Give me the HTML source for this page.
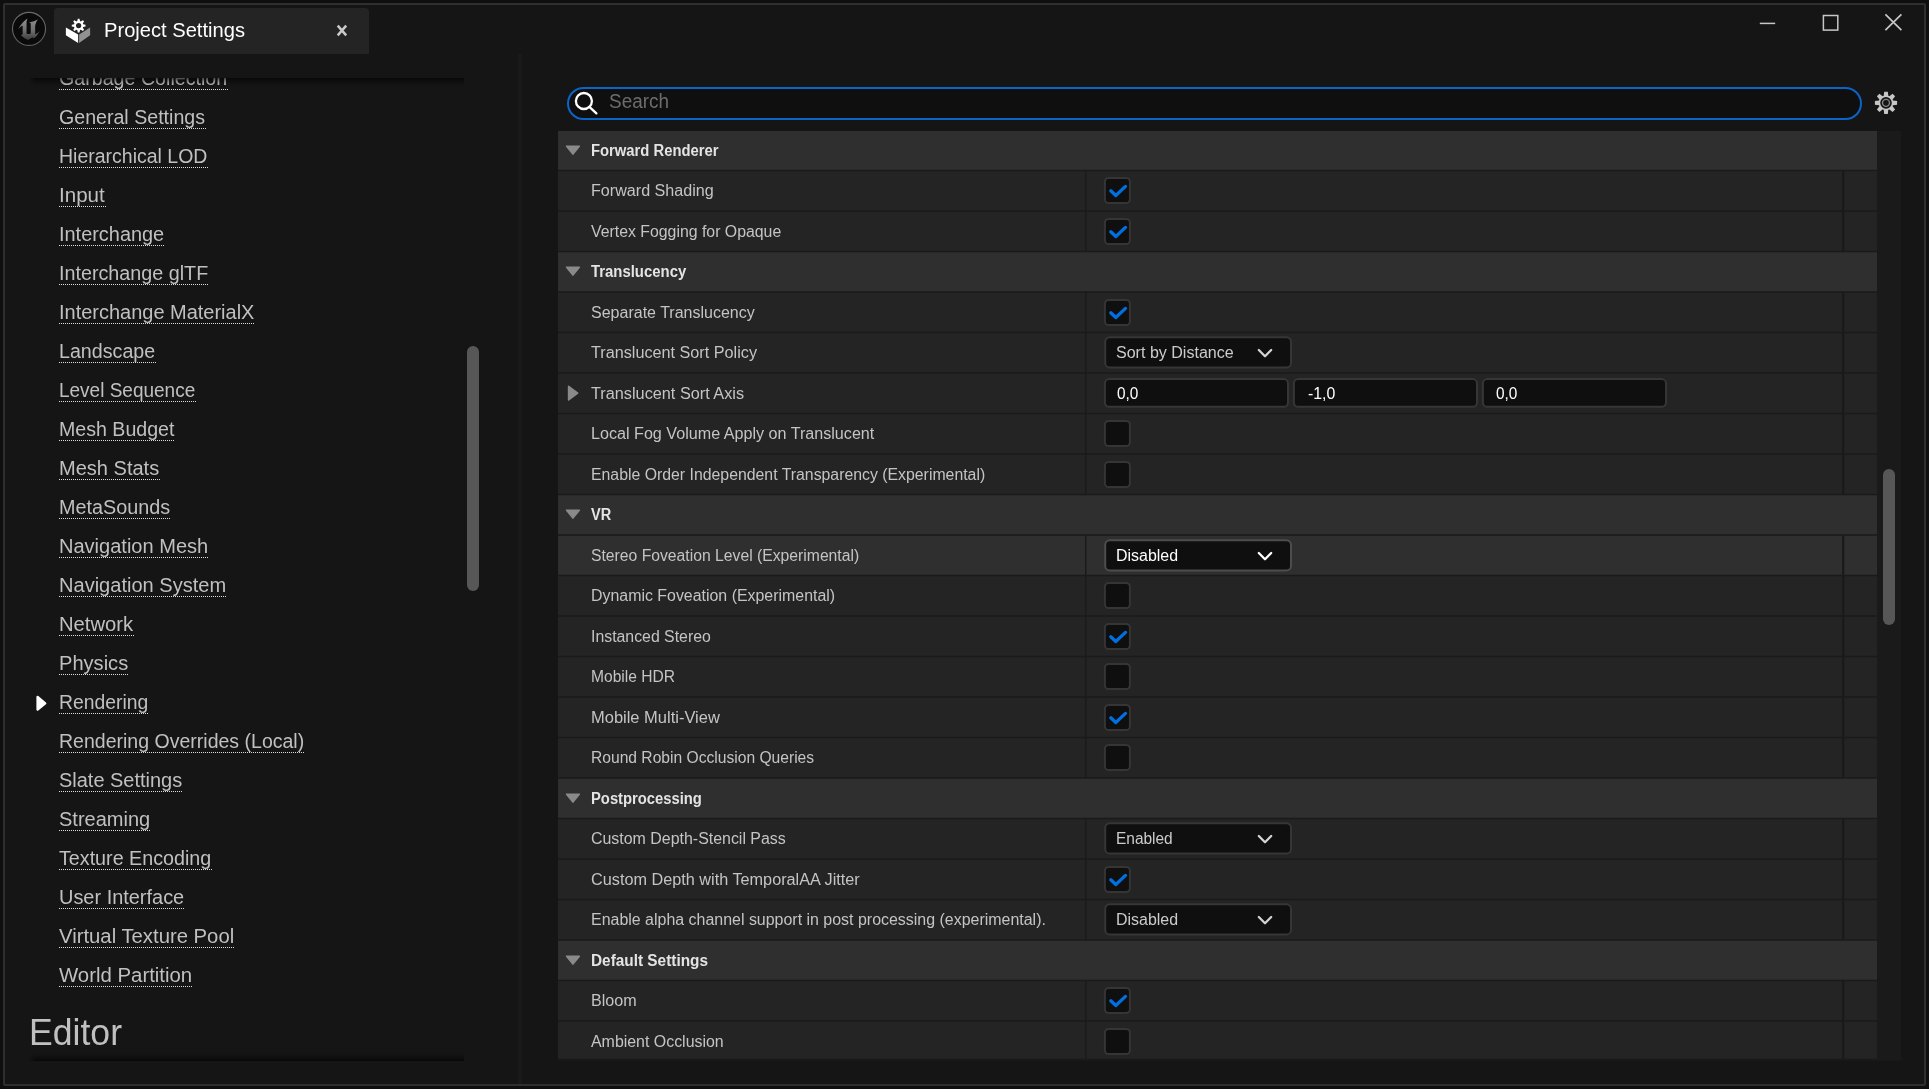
<!DOCTYPE html>
<html lang="en"><head><meta charset="utf-8"><title>Project Settings</title>
<style>
html,body{margin:0;padding:0}
body{width:1929px;height:1089px;background:#0f0f0f;overflow:hidden;position:relative;font-family:"Liberation Sans", Arial, sans-serif;}
.abs{position:absolute}
.win{position:absolute;left:3px;top:3px;width:1923px;height:1083px;box-sizing:border-box;border:2px solid #2f2f2f;border-radius:2px;background:#151515}
.t{position:absolute;white-space:nowrap;transform-origin:0 50%;display:block}
.gl{position:absolute;left:0;top:0;width:1929px;height:1089px;will-change:transform}
.ul{position:absolute;height:1px;background:repeating-linear-gradient(90deg,#dedede 0,#dedede 1px,transparent 1px,transparent 2px)}
.tab{position:absolute;left:54px;top:8px;width:315px;height:46px;background:#242424;border-radius:4px 4px 0 0}
.split{position:absolute;left:518px;top:54px;width:4px;height:1030px;background:#1a1a1a}
.lclip{position:absolute;left:0;top:78px;width:518px;height:983px;overflow:hidden}
.lclip .in{position:absolute;left:0;top:-78px;width:518px;height:1089px}
.shT{position:absolute;left:29px;top:78px;width:435px;height:9px;background:linear-gradient(rgba(0,0,0,.62) 0,rgba(0,0,0,.46) 18%,rgba(0,0,0,.24) 42%,rgba(0,0,0,.08) 72%,rgba(0,0,0,0) 100%)}
.shB{position:absolute;left:29px;top:1053px;width:435px;height:8px;background:linear-gradient(rgba(0,0,0,0) 0,rgba(0,0,0,.2) 45%,rgba(0,0,0,.45) 78%,rgba(0,0,0,.62) 100%)}
.shT,.shB{-webkit-mask-image:linear-gradient(90deg,transparent 0,#000 7px);mask-image:linear-gradient(90deg,transparent 0,#000 7px)}
.thumbL{position:absolute;left:467px;top:346px;width:12px;height:245px;border-radius:6px;background:#575757}
.thumbR{position:absolute;left:1883px;top:469px;width:12px;height:156px;border-radius:6px;background:#575757}
.search{position:absolute;left:567px;top:87px;width:1295px;height:33px;box-sizing:border-box;border:2px solid #0b64c8;border-radius:17px;background:#0f0f0f}
</style></head><body>
<div class="win"></div>
<div class="tab"></div>
<div class="split"></div>
<div class="lclip"><div class="in gl"><span id="t0" class="t lnk" style="left:58.80px;top:68px;font-size:20px;line-height:20px;color:#c0c0c0;transform:scaleX(0.9824);">Garbage Collection</span><span id="t1" class="t lnk" style="left:58.80px;top:107px;font-size:20px;line-height:20px;color:#c0c0c0;transform:scaleX(0.9800);">General Settings</span><span id="t2" class="t lnk" style="left:58.80px;top:146px;font-size:20px;line-height:20px;color:#c0c0c0;transform:scaleX(0.9746);">Hierarchical LOD</span><span id="t3" class="t lnk" style="left:58.80px;top:185px;font-size:20px;line-height:20px;color:#c0c0c0;transform:scaleX(1.0273);">Input</span><span id="t4" class="t lnk" style="left:58.80px;top:224px;font-size:20px;line-height:20px;color:#c0c0c0;transform:scaleX(0.9958);">Interchange</span><span id="t5" class="t lnk" style="left:58.80px;top:263px;font-size:20px;line-height:20px;color:#c0c0c0;transform:scaleX(0.9868);">Interchange glTF</span><span id="t6" class="t lnk" style="left:58.80px;top:302px;font-size:20px;line-height:20px;color:#c0c0c0;transform:scaleX(0.9986);">Interchange MaterialX</span><span id="t7" class="t lnk" style="left:58.80px;top:341px;font-size:20px;line-height:20px;color:#c0c0c0;transform:scaleX(0.9829);">Landscape</span><span id="t8" class="t lnk" style="left:58.80px;top:380px;font-size:20px;line-height:20px;color:#c0c0c0;transform:scaleX(0.9494);">Level Sequence</span><span id="t9" class="t lnk" style="left:58.80px;top:419px;font-size:20px;line-height:20px;color:#c0c0c0;transform:scaleX(0.9791);">Mesh Budget</span><span id="t10" class="t lnk" style="left:58.80px;top:458px;font-size:20px;line-height:20px;color:#c0c0c0;transform:scaleX(1.0015);">Mesh Stats</span><span id="t11" class="t lnk" style="left:58.80px;top:497px;font-size:20px;line-height:20px;color:#c0c0c0;transform:scaleX(0.9902);">MetaSounds</span><span id="t12" class="t lnk" style="left:58.80px;top:536px;font-size:20px;line-height:20px;color:#c0c0c0;transform:scaleX(1.0016);">Navigation Mesh</span><span id="t13" class="t lnk" style="left:58.80px;top:575px;font-size:20px;line-height:20px;color:#c0c0c0;transform:scaleX(1.0027);">Navigation System</span><span id="t14" class="t lnk" style="left:58.80px;top:614px;font-size:20px;line-height:20px;color:#c0c0c0;transform:scaleX(1.0115);">Network</span><span id="t15" class="t lnk" style="left:58.80px;top:653px;font-size:20px;line-height:20px;color:#c0c0c0;transform:scaleX(1.0043);">Physics</span><span id="t16" class="t lnk" style="left:58.80px;top:692px;font-size:20px;line-height:20px;color:#c0c0c0;transform:scaleX(0.9664);">Rendering</span><span id="t17" class="t lnk" style="left:58.80px;top:731px;font-size:20px;line-height:20px;color:#c0c0c0;transform:scaleX(0.9760);">Rendering Overrides (Local)</span><span id="t18" class="t lnk" style="left:58.80px;top:770px;font-size:20px;line-height:20px;color:#c0c0c0;transform:scaleX(0.9982);">Slate Settings</span><span id="t19" class="t lnk" style="left:58.80px;top:809px;font-size:20px;line-height:20px;color:#c0c0c0;transform:scaleX(1.0005);">Streaming</span><span id="t20" class="t lnk" style="left:58.80px;top:848px;font-size:20px;line-height:20px;color:#c0c0c0;transform:scaleX(0.9848);">Texture Encoding</span><span id="t21" class="t lnk" style="left:58.80px;top:887px;font-size:20px;line-height:20px;color:#c0c0c0;transform:scaleX(0.9967);">User Interface</span><span id="t22" class="t lnk" style="left:58.80px;top:926px;font-size:20px;line-height:20px;color:#c0c0c0;transform:scaleX(1.0145);">Virtual Texture Pool</span><span id="t23" class="t lnk" style="left:58.80px;top:965px;font-size:20px;line-height:20px;color:#c0c0c0;transform:scaleX(1.0184);">World Partition</span><span id="t24" class="t hd" style="left:29.10px;top:1014px;font-size:37px;line-height:37px;color:#c0c0c0;transform:scaleX(0.9622);">Editor</span><div class="ul" style="left:59px;top:89px;width:169px"></div><div class="ul" style="left:59px;top:128px;width:147px"></div><div class="ul" style="left:59px;top:167px;width:149px"></div><div class="ul" style="left:59px;top:206px;width:47px"></div><div class="ul" style="left:59px;top:245px;width:105px"></div><div class="ul" style="left:59px;top:284px;width:149px"></div><div class="ul" style="left:59px;top:323px;width:195px"></div><div class="ul" style="left:59px;top:362px;width:97px"></div><div class="ul" style="left:59px;top:401px;width:137px"></div><div class="ul" style="left:59px;top:440px;width:115px"></div><div class="ul" style="left:59px;top:479px;width:101px"></div><div class="ul" style="left:59px;top:518px;width:111px"></div><div class="ul" style="left:59px;top:557px;width:149px"></div><div class="ul" style="left:59px;top:596px;width:167px"></div><div class="ul" style="left:59px;top:635px;width:75px"></div><div class="ul" style="left:59px;top:674px;width:69px"></div><div class="ul" style="left:59px;top:713px;width:89px"></div><div class="ul" style="left:59px;top:752px;width:245px"></div><div class="ul" style="left:59px;top:791px;width:123px"></div><div class="ul" style="left:59px;top:830px;width:91px"></div><div class="ul" style="left:59px;top:869px;width:153px"></div><div class="ul" style="left:59px;top:908px;width:125px"></div><div class="ul" style="left:59px;top:947px;width:175px"></div><div class="ul" style="left:59px;top:986px;width:133px"></div></div></div>
<div class="shT"></div><div class="shB"></div>
<div class="thumbL"></div>
<div class="search"></div>
<svg class="abs" style="left:0;top:131px" width="1929" height="929.8" viewBox="0 131 1929 929.8"><rect x="558" y="131" width="1343" height="929.8" fill="#1a1a1a"/><rect x="558.00" y="131.00" width="1319.00" height="38.75" fill="#2f2f2f"/><path d="M566.60 146.20 L579.30 146.20 L572.95 154.10 Z" fill="#8a8a8a" stroke="#8a8a8a" stroke-width="1.6" stroke-linejoin="round"/><rect x="558.00" y="171.25" width="527.00" height="39.00" fill="#242424"/><rect x="1086.40" y="171.25" width="755.60" height="39.00" fill="#242424"/><rect x="1844.30" y="171.25" width="32.70" height="39.00" fill="#242424"/><rect x="1104.90" y="177.90" width="25.00" height="25.20" fill="#0f0f0f" rx="3.80" stroke="#353535" stroke-width="2.00"/><path d="M1110.80 190.80 L1115.80 195.45 L1125.50 186.40" fill="none" stroke="#0070e0" stroke-width="3.3" stroke-linecap="round" stroke-linejoin="round"/><rect x="558.00" y="211.75" width="527.00" height="39.00" fill="#242424"/><rect x="1086.40" y="211.75" width="755.60" height="39.00" fill="#242424"/><rect x="1844.30" y="211.75" width="32.70" height="39.00" fill="#242424"/><rect x="1104.90" y="218.90" width="25.00" height="25.20" fill="#0f0f0f" rx="3.80" stroke="#353535" stroke-width="2.00"/><path d="M1110.80 231.80 L1115.80 236.45 L1125.50 227.40" fill="none" stroke="#0070e0" stroke-width="3.3" stroke-linecap="round" stroke-linejoin="round"/><rect x="558.00" y="252.25" width="1319.00" height="39.00" fill="#2f2f2f"/><path d="M566.60 267.20 L579.30 267.20 L572.95 275.10 Z" fill="#8a8a8a" stroke="#8a8a8a" stroke-width="1.6" stroke-linejoin="round"/><rect x="558.00" y="292.75" width="527.00" height="39.00" fill="#242424"/><rect x="1086.40" y="292.75" width="755.60" height="39.00" fill="#242424"/><rect x="1844.30" y="292.75" width="32.70" height="39.00" fill="#242424"/><rect x="1104.90" y="299.90" width="25.00" height="25.20" fill="#0f0f0f" rx="3.80" stroke="#353535" stroke-width="2.00"/><path d="M1110.80 312.80 L1115.80 317.45 L1125.50 308.40" fill="none" stroke="#0070e0" stroke-width="3.3" stroke-linecap="round" stroke-linejoin="round"/><rect x="558.00" y="333.25" width="527.00" height="39.00" fill="#242424"/><rect x="1086.40" y="333.25" width="755.60" height="39.00" fill="#242424"/><rect x="1844.30" y="333.25" width="32.70" height="39.00" fill="#242424"/><rect x="1105.20" y="337.30" width="185.80" height="30.20" fill="#0f0f0f" rx="4.60" stroke="#363636" stroke-width="2.00"/><path d="M1258.80 350.00 L1265.00 356.20 L1271.20 350.00" fill="none" stroke="#d4d4d4" stroke-width="2.3" stroke-linecap="round" stroke-linejoin="round"/><rect x="558.00" y="373.75" width="527.00" height="39.00" fill="#242424"/><rect x="1086.40" y="373.75" width="755.60" height="39.00" fill="#242424"/><rect x="1844.30" y="373.75" width="32.70" height="39.00" fill="#242424"/><path d="M568.60 386.40 L577.70 393.15 L568.60 399.90 Z" fill="#8a8a8a" stroke="#8a8a8a" stroke-width="1.6" stroke-linejoin="round"/><rect x="1104.90" y="379.05" width="183.10" height="27.80" fill="#0f0f0f" rx="4.40" stroke="#363636" stroke-width="2.00"/><rect x="1293.90" y="379.05" width="183.10" height="27.80" fill="#0f0f0f" rx="4.40" stroke="#363636" stroke-width="2.00"/><rect x="1482.90" y="379.05" width="183.10" height="27.80" fill="#0f0f0f" rx="4.40" stroke="#363636" stroke-width="2.00"/><rect x="558.00" y="414.25" width="527.00" height="39.00" fill="#242424"/><rect x="1086.40" y="414.25" width="755.60" height="39.00" fill="#242424"/><rect x="1844.30" y="414.25" width="32.70" height="39.00" fill="#242424"/><rect x="1104.90" y="420.90" width="25.00" height="25.20" fill="#0f0f0f" rx="3.80" stroke="#353535" stroke-width="2.00"/><rect x="558.00" y="454.75" width="527.00" height="39.00" fill="#242424"/><rect x="1086.40" y="454.75" width="755.60" height="39.00" fill="#242424"/><rect x="1844.30" y="454.75" width="32.70" height="39.00" fill="#242424"/><rect x="1104.90" y="461.90" width="25.00" height="25.20" fill="#0f0f0f" rx="3.80" stroke="#353535" stroke-width="2.00"/><rect x="558.00" y="495.25" width="1319.00" height="39.00" fill="#2f2f2f"/><path d="M566.60 510.20 L579.30 510.20 L572.95 518.10 Z" fill="#8a8a8a" stroke="#8a8a8a" stroke-width="1.6" stroke-linejoin="round"/><rect x="558.00" y="535.75" width="527.00" height="39.00" fill="#2f2f2f"/><rect x="1086.40" y="535.75" width="755.60" height="39.00" fill="#2f2f2f"/><rect x="1844.30" y="535.75" width="32.70" height="39.00" fill="#2f2f2f"/><rect x="1105.20" y="540.30" width="185.80" height="30.20" fill="#0f0f0f" rx="4.60" stroke="#4d4d4d" stroke-width="2.00"/><path d="M1258.80 553.00 L1265.00 559.20 L1271.20 553.00" fill="none" stroke="#ffffff" stroke-width="2.3" stroke-linecap="round" stroke-linejoin="round"/><rect x="558.00" y="576.25" width="527.00" height="39.00" fill="#242424"/><rect x="1086.40" y="576.25" width="755.60" height="39.00" fill="#242424"/><rect x="1844.30" y="576.25" width="32.70" height="39.00" fill="#242424"/><rect x="1104.90" y="582.90" width="25.00" height="25.20" fill="#0f0f0f" rx="3.80" stroke="#353535" stroke-width="2.00"/><rect x="558.00" y="616.75" width="527.00" height="39.00" fill="#242424"/><rect x="1086.40" y="616.75" width="755.60" height="39.00" fill="#242424"/><rect x="1844.30" y="616.75" width="32.70" height="39.00" fill="#242424"/><rect x="1104.90" y="623.90" width="25.00" height="25.20" fill="#0f0f0f" rx="3.80" stroke="#353535" stroke-width="2.00"/><path d="M1110.80 636.80 L1115.80 641.45 L1125.50 632.40" fill="none" stroke="#0070e0" stroke-width="3.3" stroke-linecap="round" stroke-linejoin="round"/><rect x="558.00" y="657.25" width="527.00" height="39.00" fill="#242424"/><rect x="1086.40" y="657.25" width="755.60" height="39.00" fill="#242424"/><rect x="1844.30" y="657.25" width="32.70" height="39.00" fill="#242424"/><rect x="1104.90" y="663.90" width="25.00" height="25.20" fill="#0f0f0f" rx="3.80" stroke="#353535" stroke-width="2.00"/><rect x="558.00" y="697.75" width="527.00" height="39.00" fill="#242424"/><rect x="1086.40" y="697.75" width="755.60" height="39.00" fill="#242424"/><rect x="1844.30" y="697.75" width="32.70" height="39.00" fill="#242424"/><rect x="1104.90" y="704.90" width="25.00" height="25.20" fill="#0f0f0f" rx="3.80" stroke="#353535" stroke-width="2.00"/><path d="M1110.80 717.80 L1115.80 722.45 L1125.50 713.40" fill="none" stroke="#0070e0" stroke-width="3.3" stroke-linecap="round" stroke-linejoin="round"/><rect x="558.00" y="738.25" width="527.00" height="39.00" fill="#242424"/><rect x="1086.40" y="738.25" width="755.60" height="39.00" fill="#242424"/><rect x="1844.30" y="738.25" width="32.70" height="39.00" fill="#242424"/><rect x="1104.90" y="744.90" width="25.00" height="25.20" fill="#0f0f0f" rx="3.80" stroke="#353535" stroke-width="2.00"/><rect x="558.00" y="778.75" width="1319.00" height="39.00" fill="#2f2f2f"/><path d="M566.60 794.20 L579.30 794.20 L572.95 802.10 Z" fill="#8a8a8a" stroke="#8a8a8a" stroke-width="1.6" stroke-linejoin="round"/><rect x="558.00" y="819.25" width="527.00" height="39.00" fill="#242424"/><rect x="1086.40" y="819.25" width="755.60" height="39.00" fill="#242424"/><rect x="1844.30" y="819.25" width="32.70" height="39.00" fill="#242424"/><rect x="1105.20" y="823.30" width="185.80" height="30.20" fill="#0f0f0f" rx="4.60" stroke="#363636" stroke-width="2.00"/><path d="M1258.80 836.00 L1265.00 842.20 L1271.20 836.00" fill="none" stroke="#d4d4d4" stroke-width="2.3" stroke-linecap="round" stroke-linejoin="round"/><rect x="558.00" y="859.75" width="527.00" height="39.00" fill="#242424"/><rect x="1086.40" y="859.75" width="755.60" height="39.00" fill="#242424"/><rect x="1844.30" y="859.75" width="32.70" height="39.00" fill="#242424"/><rect x="1104.90" y="866.90" width="25.00" height="25.20" fill="#0f0f0f" rx="3.80" stroke="#353535" stroke-width="2.00"/><path d="M1110.80 879.80 L1115.80 884.45 L1125.50 875.40" fill="none" stroke="#0070e0" stroke-width="3.3" stroke-linecap="round" stroke-linejoin="round"/><rect x="558.00" y="900.25" width="527.00" height="39.00" fill="#242424"/><rect x="1086.40" y="900.25" width="755.60" height="39.00" fill="#242424"/><rect x="1844.30" y="900.25" width="32.70" height="39.00" fill="#242424"/><rect x="1105.20" y="904.30" width="185.80" height="30.20" fill="#0f0f0f" rx="4.60" stroke="#363636" stroke-width="2.00"/><path d="M1258.80 917.00 L1265.00 923.20 L1271.20 917.00" fill="none" stroke="#d4d4d4" stroke-width="2.3" stroke-linecap="round" stroke-linejoin="round"/><rect x="558.00" y="940.75" width="1319.00" height="39.00" fill="#2f2f2f"/><path d="M566.60 956.20 L579.30 956.20 L572.95 964.10 Z" fill="#8a8a8a" stroke="#8a8a8a" stroke-width="1.6" stroke-linejoin="round"/><rect x="558.00" y="981.25" width="527.00" height="39.00" fill="#242424"/><rect x="1086.40" y="981.25" width="755.60" height="39.00" fill="#242424"/><rect x="1844.30" y="981.25" width="32.70" height="39.00" fill="#242424"/><rect x="1104.90" y="987.90" width="25.00" height="25.20" fill="#0f0f0f" rx="3.80" stroke="#353535" stroke-width="2.00"/><path d="M1110.80 1000.80 L1115.80 1005.45 L1125.50 996.40" fill="none" stroke="#0070e0" stroke-width="3.3" stroke-linecap="round" stroke-linejoin="round"/><rect x="558.00" y="1021.75" width="527.00" height="36.95" fill="#242424"/><rect x="1086.40" y="1021.75" width="755.60" height="36.95" fill="#242424"/><rect x="1844.30" y="1021.75" width="32.70" height="36.95" fill="#242424"/><rect x="1104.90" y="1028.90" width="25.00" height="25.20" fill="#0f0f0f" rx="3.80" stroke="#353535" stroke-width="2.00"/></svg>
<div class="thumbR"></div>
<div class="gl"><span id="t25" class="t" style="left:104.00px;top:20px;font-size:20px;line-height:20px;color:#ffffff;transform:scaleX(1.0066);">Project Settings</span><span id="t26" class="t" style="left:608.90px;top:91px;font-size:20px;line-height:20px;color:#6c6c6c;transform:scaleX(0.9467);">Search</span><span id="t27" class="t" style="left:590.80px;top:143px;font-size:16px;line-height:16px;color:#e4e4e4;font-weight:700;transform:scaleX(0.9252);">Forward Renderer</span><span id="t28" class="t" style="left:590.80px;top:183px;font-size:16px;line-height:16px;color:#c4c4c4;transform:scaleX(1.0078);">Forward Shading</span><span id="t29" class="t" style="left:590.80px;top:224px;font-size:16px;line-height:16px;color:#c4c4c4;transform:scaleX(0.9900);">Vertex Fogging for Opaque</span><span id="t30" class="t" style="left:590.80px;top:264px;font-size:16px;line-height:16px;color:#e4e4e4;font-weight:700;transform:scaleX(0.9308);">Translucency</span><span id="t31" class="t" style="left:590.80px;top:305px;font-size:16px;line-height:16px;color:#c4c4c4;transform:scaleX(1.0009);">Separate Translucency</span><span id="t32" class="t" style="left:590.80px;top:345px;font-size:16px;line-height:16px;color:#c4c4c4;transform:scaleX(1.0127);">Translucent Sort Policy</span><span id="t33" class="t" style="left:1115.60px;top:345px;font-size:16px;line-height:16px;color:#cccccc;transform:scaleX(1.0026);">Sort by Distance</span><span id="t34" class="t" style="left:590.80px;top:386px;font-size:16px;line-height:16px;color:#c4c4c4;transform:scaleX(1.0167);">Translucent Sort Axis</span><span id="t35" class="t" style="left:1117.40px;top:386px;font-size:16px;line-height:16px;color:#ffffff;transform:scaleX(0.9618);">0,0</span><span id="t36" class="t" style="left:1307.60px;top:386px;font-size:16px;line-height:16px;color:#ffffff;transform:scaleX(0.9899);">-1,0</span><span id="t37" class="t" style="left:1495.80px;top:386px;font-size:16px;line-height:16px;color:#ffffff;transform:scaleX(0.9618);">0,0</span><span id="t38" class="t" style="left:590.80px;top:426px;font-size:16px;line-height:16px;color:#c4c4c4;transform:scaleX(1.0080);">Local Fog Volume Apply on Translucent</span><span id="t39" class="t" style="left:590.80px;top:467px;font-size:16px;line-height:16px;color:#c4c4c4;transform:scaleX(0.9893);">Enable Order Independent Transparency (Experimental)</span><span id="t40" class="t" style="left:590.80px;top:507px;font-size:16px;line-height:16px;color:#e4e4e4;font-weight:700;transform:scaleX(0.9085);">VR</span><span id="t41" class="t" style="left:590.80px;top:548px;font-size:16px;line-height:16px;color:#c4c4c4;transform:scaleX(0.9823);">Stereo Foveation Level (Experimental)</span><span id="t42" class="t" style="left:1115.60px;top:548px;font-size:16px;line-height:16px;color:#ffffff;transform:scaleX(0.9973);">Disabled</span><span id="t43" class="t" style="left:590.80px;top:588px;font-size:16px;line-height:16px;color:#c4c4c4;transform:scaleX(0.9946);">Dynamic Foveation (Experimental)</span><span id="t44" class="t" style="left:590.80px;top:629px;font-size:16px;line-height:16px;color:#c4c4c4;transform:scaleX(0.9903);">Instanced Stereo</span><span id="t45" class="t" style="left:590.80px;top:669px;font-size:16px;line-height:16px;color:#c4c4c4;transform:scaleX(0.9739);">Mobile HDR</span><span id="t46" class="t" style="left:590.80px;top:710px;font-size:16px;line-height:16px;color:#c4c4c4;transform:scaleX(1.0298);">Mobile Multi-View</span><span id="t47" class="t" style="left:590.80px;top:750px;font-size:16px;line-height:16px;color:#c4c4c4;transform:scaleX(0.9761);">Round Robin Occlusion Queries</span><span id="t48" class="t" style="left:590.80px;top:791px;font-size:16px;line-height:16px;color:#e4e4e4;font-weight:700;transform:scaleX(0.9239);">Postprocessing</span><span id="t49" class="t" style="left:590.80px;top:831px;font-size:16px;line-height:16px;color:#c4c4c4;transform:scaleX(0.9957);">Custom Depth-Stencil Pass</span><span id="t50" class="t" style="left:1115.60px;top:831px;font-size:16px;line-height:16px;color:#cccccc;transform:scaleX(0.9656);">Enabled</span><span id="t51" class="t" style="left:590.80px;top:872px;font-size:16px;line-height:16px;color:#c4c4c4;transform:scaleX(1.0151);">Custom Depth with TemporalAA Jitter</span><span id="t52" class="t" style="left:590.80px;top:912px;font-size:16px;line-height:16px;color:#c4c4c4;transform:scaleX(0.9970);">Enable alpha channel support in post processing (experimental).</span><span id="t53" class="t" style="left:1115.60px;top:912px;font-size:16px;line-height:16px;color:#cccccc;transform:scaleX(0.9973);">Disabled</span><span id="t54" class="t" style="left:590.80px;top:953px;font-size:16px;line-height:16px;color:#e4e4e4;font-weight:700;transform:scaleX(0.9606);">Default Settings</span><span id="t55" class="t" style="left:590.80px;top:993px;font-size:16px;line-height:16px;color:#c4c4c4;transform:scaleX(1.0053);">Bloom</span><span id="t56" class="t" style="left:590.80px;top:1034px;font-size:16px;line-height:16px;color:#c4c4c4;transform:scaleX(0.9948);">Ambient Occlusion</span></div>

<svg class="abs" style="left:9px;top:9px" width="40" height="40" viewBox="0 0 1089 1089">
<defs><linearGradient id="ug" x1="0" y1="0" x2="0" y2="1"><stop offset="0" stop-color="#8e9091"/><stop offset="0.55" stop-color="#6e7071"/><stop offset="1" stop-color="#3a3c3d"/></linearGradient>
<linearGradient id="rg" x1="0" y1="0" x2="0" y2="1"><stop offset="0" stop-color="#6a6a6a"/><stop offset="1" stop-color="#5a5a5a"/></linearGradient></defs>
<circle cx="545" cy="541" r="450" fill="#0a0a0a" stroke="url(#rg)" stroke-width="32"/>
<path fill="url(#ug)" d="M252 545 Q330 380 500 256 L478 345 L478 668 Q535 700 592 668 L592 388 L545 366 Q690 340 786 284 Q722 362 712 450 L712 690 Q772 670 832 604 Q762 742 672 806 L640 766 L520 842 Q400 792 324 712 L372 690 L372 455 Q318 470 252 545 Z"/>
</svg>
<svg class="abs" style="left:58px;top:12px" width="40" height="40" viewBox="0 0 1089 1089">
<polygon points="215,425 548,615 548,845 215,635" fill="#ffffff"/>
<polygon points="575,615 875,425 875,635 575,845" fill="#919191"/>
<g transform="translate(562,370)" fill="#ffffff">
<path fill-rule="evenodd" d="M-39.6 -121.7 L-22.1 -186.7 L22.1 -186.7 L39.6 -121.7 L58.1 -114.0 L116.4 -147.6 L147.6 -116.4 L114.0 -58.1 L121.7 -39.6 L186.7 -22.1 L186.7 22.1 L121.7 39.6 L114.0 58.1 L147.6 116.4 L116.4 147.6 L58.1 114.0 L39.6 121.7 L22.1 186.7 L-22.1 186.7 L-39.6 121.7 L-58.1 114.0 L-116.4 147.6 L-147.6 116.4 L-114.0 58.1 L-121.7 39.6 L-186.7 22.1 L-186.7 -22.1 L-121.7 -39.6 L-114.0 -58.1 L-147.6 -116.4 L-116.4 -147.6 L-58.1 -114.0 Z M72.0 0 A72.0 72.0 0 1 0 -72.0 0 A72.0 72.0 0 1 0 72.0 0 Z"/>
</g>
</svg>
<svg class="abs" style="left:1866px;top:82px" width="40" height="42" viewBox="-20 -20.85 40 42"><path fill-rule="evenodd" fill="#c6c6c6" d="M-2.3 -7.0 L-1.8 -11.1 L1.8 -11.1 L2.3 -7.0 L3.4 -6.6 L6.6 -9.1 L9.1 -6.6 L6.6 -3.4 L7.0 -2.3 L11.1 -1.8 L11.1 1.8 L7.0 2.3 L6.6 3.4 L9.1 6.6 L6.6 9.1 L3.4 6.6 L2.3 7.0 L1.8 11.1 L-1.8 11.1 L-2.3 7.0 L-3.4 6.6 L-6.6 9.1 L-9.1 6.6 L-6.6 3.4 L-7.0 2.3 L-11.1 1.8 L-11.1 -1.8 L-7.0 -2.3 L-6.6 -3.4 L-9.1 -6.6 L-6.6 -9.1 L-3.4 -6.6 Z M5.8 0 A5.8 5.8 0 1 0 -5.8 0 A5.8 5.8 0 1 0 5.8 0 Z"/><circle r="3.5" fill="none" stroke="#858585" stroke-width="1.4"/></svg>
<svg class="abs" style="left:1750px;top:5px" width="170" height="40" viewBox="1750 5 170 40" fill="none" stroke="#c6c6c6" stroke-width="1.5">
<path d="M1759.8 23.4 H1775.2"/>
<rect x="1823.4" y="15.5" width="14.4" height="14.6"/>
<path d="M1885.4 14.4 L1901.4 30.2 M1901.4 14.4 L1885.4 30.2" stroke-width="1.7"/>
</svg>
<svg class="abs" style="left:330px;top:20px" width="24" height="24" viewBox="330 20 24 24" fill="none" stroke="#cacaca" stroke-width="2.5">
<path d="M337.7 25.7 L346.2 35.3 M346.2 25.7 L337.7 35.3"/>
</svg>
<svg class="abs" style="left:570px;top:88px" width="32" height="30" viewBox="570 88 32 30" fill="none" stroke="#ffffff" stroke-width="2.3" stroke-linecap="round">
<circle cx="583.9" cy="101" r="8"/><path d="M589.9 107.3 L596.4 113.4"/>
</svg>
<svg class="abs" style="left:32px;top:690px" width="20" height="26" viewBox="32 690 20 26">
<path d="M37.6 697 L45.2 703.3 L37.6 709.6 Z" fill="#ffffff" stroke="#ffffff" stroke-width="2.4" stroke-linejoin="round"/>
</svg>

</body></html>
